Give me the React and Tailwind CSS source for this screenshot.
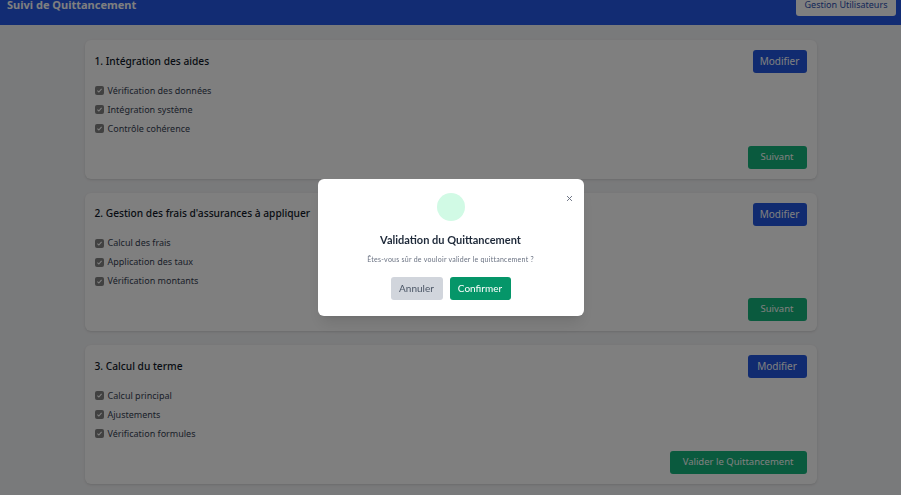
import React from 'react';

const steps = [
  {
    title: '1. Intégration des aides',
    items: ['Vérification des données', 'Intégration système', 'Contrôle cohérence'],
    action: 'Suivant',
  },
  {
    title: "2. Gestion des frais d'assurances à appliquer",
    items: ['Calcul des frais', 'Application des taux', 'Vérification montants'],
    action: 'Suivant',
  },
  {
    title: '3. Calcul du terme',
    items: ['Calcul principal', 'Ajustements', 'Vérification formules'],
    action: 'Valider le Quittancement',
    last: true,
  },
];

const CheckBox = () => (
  <span className="w-[9px] h-[9px] rounded-[2px] bg-[#828282] flex items-center justify-center shrink-0">
    <svg viewBox="0 0 10 10" className="w-[7px] h-[7px]">
      <path d="M2 5.2 L4.1 7.2 L8 2.8" fill="none" stroke="#ffffff" strokeWidth="1.6" />
    </svg>
  </span>
);

const StepCard = ({ step }) => (
  <div className="bg-white rounded-md shadow-sm p-2.5 flex flex-col">
    <div className="flex items-center justify-between h-[23px]">
      <h2 className="text-[10.2px] font-medium text-gray-900">{step.title}</h2>
      <button
        className={`h-[23px] rounded-[3px] bg-[#2257e0] text-white text-[10px] ${
          step.last ? 'w-[59px]' : 'w-[54px]'
        }`}
      >
        Modifier
      </button>
    </div>
    <ul className="mt-[10px] flex flex-col gap-[4px]">
      {step.items.map((item) => (
        <li key={item} className="flex items-center gap-[4px] h-[15px] text-[9px] text-gray-700">
          <CheckBox />
          <span>{item}</span>
        </li>
      ))}
    </ul>
    <div className="flex justify-end mt-[9.5px]">
      <button className="h-[23px] px-[13px] rounded-[3px] bg-[#14b47c] text-white text-[9.5px]">
        {step.action}
      </button>
    </div>
  </div>
);

export default function App() {
  return (
    <div className="h-screen overflow-hidden relative bg-gray-100" style={{ fontFamily: '"Noto Sans", "Open Sans", sans-serif' }}>
      <div className="-mt-[15px]">
        <header className="h-[40px] bg-[#2459e6] flex items-center justify-between pl-[7px] pr-[5px]">
          <h1 className="text-[11px] font-bold text-white">Suivi de Quittancement</h1>
          <button className="h-[22px] w-[100px] rounded-[3px] bg-white text-[#2a4fb0] text-[9px]">
            Gestion Utilisateurs
          </button>
        </header>

        <main className="w-[732px] mx-auto mt-[15px] flex flex-col gap-[14px]">
          {steps.map((step) => (
            <StepCard key={step.title} step={step} />
          ))}
        </main>
      </div>

      {/* Confirmation modal */}
      <div className="fixed inset-0 bg-black/50 flex items-center justify-center">
        <div
          className="relative w-[266px] h-[137px] bg-white rounded-md shadow-lg flex flex-col items-center pt-[14px]"
          style={{ fontFamily: 'Lato, "Noto Sans", sans-serif' }}
        >
          <button className="absolute right-[8px] top-[13px] w-[12px] h-[12px] flex items-center justify-center text-gray-500">
            <svg viewBox="0 0 10 10" className="w-[7px] h-[7px]">
              <path d="M1.5 1.5 L8.5 8.5 M8.5 1.5 L1.5 8.5" stroke="currentColor" strokeWidth="1.4" />
            </svg>
          </button>
          <div className="w-[28px] h-[28px] rounded-full bg-[#d1fae5]" />
          <h3 className="mt-[11px] text-[11px] font-bold text-gray-800">Validation du Quittancement</h3>
          <p className="mt-[5px] text-[7px] tracking-[0.25px] text-gray-500">Êtes-vous sûr de vouloir valider le quittancement ?</p>
          <div className="mt-[13px] flex gap-[7px]">
            <button className="h-[23px] w-[52px] rounded-[3px] bg-gray-300 text-gray-600 text-[10px]">Annuler</button>
            <button className="h-[23px] w-[61px] rounded-[3px] bg-[#059669] text-white text-[10px]">Confirmer</button>
          </div>
        </div>
      </div>
    </div>
  );
}
